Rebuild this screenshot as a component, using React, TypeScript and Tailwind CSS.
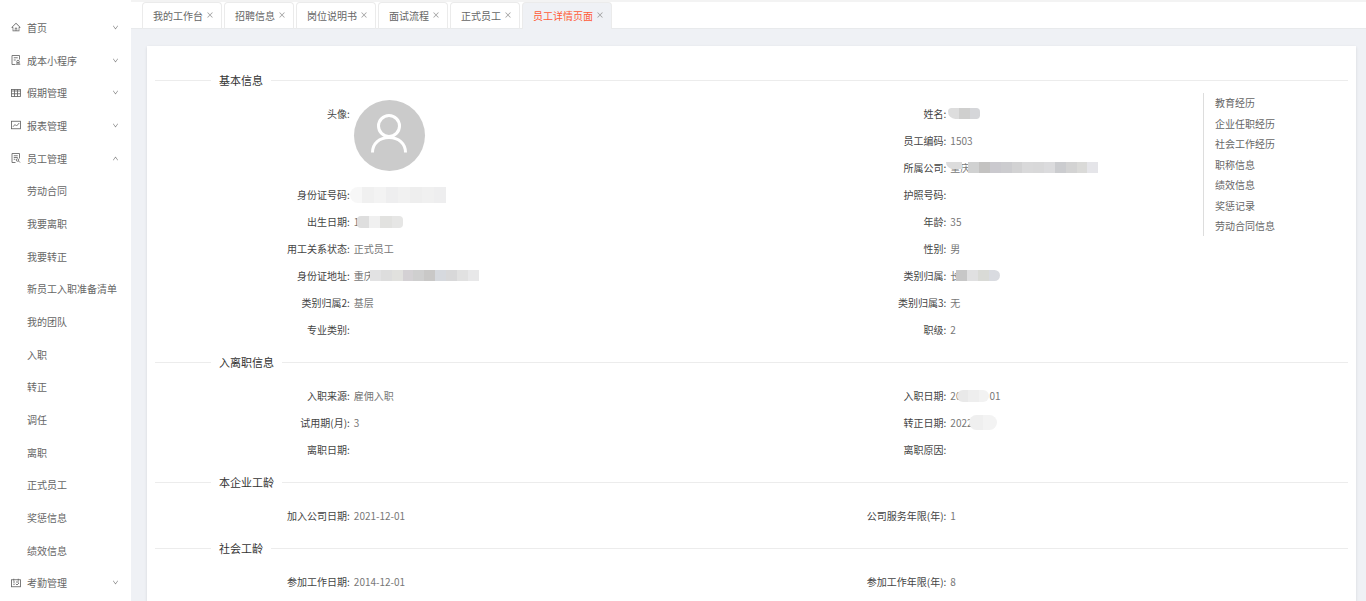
import type { ReactNode } from "react";
import { AiOutlineClose, AiOutlineDown, AiOutlineHome, AiOutlineUp } from "react-icons/ai";

interface MenuEntry {
  label: string;
  icon?: ReactNode;
  open?: boolean;
}

interface Field {
  label: string;
  value?: ReactNode;
}

interface SectionData {
  title: string;
  left: Field[];
  right: Field[];
}

function LineIcon({ children }: { children: ReactNode }) {
  return (
    <svg viewBox="0 0 20 20" className="size-[10px]" fill="none" stroke="currentColor" strokeWidth="1.7">
      {children}
    </svg>
  );
}

const menu: MenuEntry[] = [
  { label: "首页", icon: <AiOutlineHome />, open: false },
  {
    label: "成本小程序",
    icon: (
      <LineIcon>
        <path d="M9 19H2V1h15v8M5.500 5.500h8M5.500 10h4" />
        <circle cx="14" cy="13" r="2.500" />
        <path d="M10 18.500h8.500M10.500 16h7.500" />
      </LineIcon>
    ),
    open: false,
  },
  {
    label: "假期管理",
    icon: (
      <LineIcon>
        <rect x="1" y="3" width="18" height="14" />
        <path d="M1 6h18M1 11.500h18M7 3v14M13 3v14" />
      </LineIcon>
    ),
    open: false,
  },
  {
    label: "报表管理",
    icon: (
      <LineIcon>
        <rect x="1" y="2.500" width="18" height="15" />
        <path d="M4 13.500l4-4.500 3 3 5.500-6" />
      </LineIcon>
    ),
    open: false,
  },
  {
    label: "员工管理",
    icon: (
      <LineIcon>
        <path d="M9 19H2V1h15v10M5.500 5.500h8M5.500 9h8M5.500 12.500h3" />
        <circle cx="13" cy="14" r="2.500" />
        <path d="M15 16l3 3" />
      </LineIcon>
    ),
    open: true,
  },
  { label: "劳动合同" },
  { label: "我要离职" },
  { label: "我要转正" },
  { label: "新员工入职准备清单" },
  { label: "我的团队" },
  { label: "入职" },
  { label: "转正" },
  { label: "调任" },
  { label: "离职" },
  { label: "正式员工" },
  { label: "奖惩信息" },
  { label: "绩效信息" },
  {
    label: "考勤管理",
    icon: (
      <LineIcon>
        <rect x="1" y="3.500" width="18" height="14" />
        <path d="M5.500 1.500v4M14.500 1.500v4M4 8h4M10 8h6M4.500 12.500h3M9.500 11.500l2.500 2.500 4-4" />
      </LineIcon>
    ),
    open: false,
  },
];

const tabs = ["我的工作台", "招聘信息", "岗位说明书", "面试流程", "正式员工", "员工详情页面"];

const anchors = ["教育经历", "企业任职经历", "社会工作经历", "职称信息", "绩效信息", "奖惩记录", "劳动合同信息"];

// Pixelated strip that hides personal data
function Mask({ className, blocks }: { className: string; blocks: string[] }) {
  return (
    <span className={`relative flex overflow-hidden ${className}`}>
      {blocks.map((block, i) => (
        <span key={i} className={`flex-1 ${block}`} />
      ))}
    </span>
  );
}

const sections: SectionData[] = [
  {
    title: "基本信息",
    left: [
      {
        label: "头像",
        value: (
          <span className="flex size-[71px] items-center justify-center rounded-full bg-[#cbcbcb] pb-1">
            <svg viewBox="0 0 40 40" className="size-10" fill="none" stroke="white" strokeWidth="3">
              <circle cx="20" cy="12" r="10.5" />
              <path d="M3.5 38.5c0-9 7-15 16.500-15s16.500 6 16.500 15" />
            </svg>
          </span>
        ),
      },
      {
        label: "身份证号码",
        value: (
          <Mask
            className="-ml-1 h-4 w-24 rounded-l-lg"
            blocks={["bg-[#f7f7f7]", "bg-[#f0f0f0]", "bg-[#f3f3f3]", "bg-[#eeeeef]", "bg-[#f1f1f1]", "bg-[#eeeeee]", "bg-[#f0f0f0]", "bg-[#eeeeef]"]}
          />
        ),
      },
      {
        label: "出生日期",
        value: (
          <>
            1
            <Mask
              className="-ml-0.5 h-3 w-[46px] rounded"
              blocks={["bg-[#dedede]", "bg-[#f0f0f0]", "bg-[#e2e2e0]", "bg-[#e6e6e5]"]}
            />
          </>
        ),
      },
      { label: "用工关系状态", value: "正式员工" },
      {
        label: "身份证地址",
        value: (
          <>
            重庆
            <Mask
              className="-ml-1 h-[11px] w-[109px]"
              blocks={["bg-[#e2e2e3]", "bg-[#dddddd]", "bg-[#e1e1de]", "bg-[#d4d1d4]", "bg-[#cfcfcf]", "bg-[#c9c8c7]", "bg-[#d6d9de]", "bg-[#d8d8d9]", "bg-[#e1e1e1]", "bg-[#e8e8e9]"]}
            />
          </>
        ),
      },
      { label: "类别归属2", value: "基层" },
      { label: "专业类别" },
    ],
    right: [
      {
        label: "姓名",
        value: (
          <Mask
            className="-ml-0.5 h-[11px] w-8 rounded-sm rounded-bl-lg"
            blocks={["bg-[#dddddd]", "bg-[#cfcfce]", "bg-[#d5d6d9]"]}
          />
        ),
      },
      { label: "员工编码", value: "1503" },
      {
        label: "所属公司",
        value: (
          <>
            <span className="relative">
              重庆
              <span className="absolute top-2 -left-1 h-[7px] w-4 rounded-bl-lg bg-[#dcdcdc]" />
            </span>
            <Mask
              className="-ml-0.5 h-[11px] w-[130px]"
              blocks={["bg-[#d0d1d1]", "bg-[#c3c2c1]", "bg-[#cac9ce]", "bg-[#cccccf]", "bg-[#d2d2d3]", "bg-[#d9d9da]", "bg-[#d8d8d9]", "bg-[#dbdbdd]", "bg-[#cbcccf]", "bg-[#d3d3d3]", "bg-[#dadad8]", "bg-[#e5e5e9]"]}
            />
          </>
        ),
      },
      { label: "护照号码" },
      { label: "年龄", value: "35" },
      { label: "性别", value: "男" },
      {
        label: "类别归属",
        value: (
          <>
            长
            <Mask
              className="-ml-1 h-[11px] w-11 rounded-r-md"
              blocks={["bg-[#c7c7c7]", "bg-[#e0e0e1]", "bg-[#d9dad6]", "bg-[#d9dbe0]"]}
            />
          </>
        ),
      },
      { label: "类别归属3", value: "无" },
      { label: "职级", value: "2" },
    ],
  },
  {
    title: "入离职信息",
    left: [
      { label: "入职来源", value: "雇佣入职" },
      { label: "试用期(月)", value: "3" },
      { label: "离职日期" },
    ],
    right: [
      {
        label: "入职日期",
        value: (
          <>
            20
            <Mask className="-ml-1 h-3 w-8 rounded-lg" blocks={["bg-[#e9e9e9]", "bg-[#eeeeee]", "bg-[#f2f2f2]"]} />
            01
          </>
        ),
      },
      {
        label: "转正日期",
        value: (
          <>
            2022
            <Mask className="-ml-1 h-[15px] w-7 rounded-lg" blocks={["bg-[#efefef]", "bg-[#f3f3f3]"]} />
          </>
        ),
      },
      { label: "离职原因" },
    ],
  },
  {
    title: "本企业工龄",
    left: [{ label: "加入公司日期", value: "2021-12-01" }],
    right: [{ label: "公司服务年限(年)", value: "1" }],
  },
  {
    title: "社会工龄",
    left: [{ label: "参加工作日期", value: "2014-12-01" }],
    right: [{ label: "参加工作年限(年)", value: "8" }],
  },
];

function FieldList({ fields }: { fields: Field[] }) {
  return (
    <dl>
      {fields.map((field) => (
        <div key={field.label} className={`flex ${field.label === "头像" ? "h-[81px]" : "h-[27px]"}`}>
          <dt className="w-1/3 pr-1 text-right leading-[27px] text-[#444]">{field.label}:</dt>
          <dd className="flex min-h-[27px] flex-1 items-center self-start leading-[27px] text-[#777]">
            {field.value}
          </dd>
        </div>
      ))}
    </dl>
  );
}

function Section({ section }: { section: SectionData }) {
  return (
    <section>
      <div className="flex h-[39px] items-center gap-2">
        <span className="h-px w-14 bg-[#ececec]" />
        <h2 className="text-[11px] text-[#333]">{section.title}</h2>
        <span className="h-px flex-1 bg-[#ececec]" />
      </div>
      <div className="grid grid-cols-2">
        <FieldList fields={section.left} />
        <FieldList fields={section.right} />
      </div>
    </section>
  );
}

function Sidebar() {
  return (
    <nav className="flex w-[131px] shrink-0 flex-col bg-white pt-[11px] pb-0.5">
      {menu.map((item) => (
        <button
          key={item.label}
          type="button"
          className="flex min-h-8 w-full flex-1 items-center pr-3 pl-[11px] text-left text-[#666]"
        >
          <span className="w-4">{item.icon}</span>
          <span className="flex-1 whitespace-nowrap">{item.label}</span>
          {item.icon && (
            <span className="text-[7px] text-[#777]">{item.open ? <AiOutlineUp /> : <AiOutlineDown />}</span>
          )}
        </button>
      ))}
    </nav>
  );
}

export default function App() {
  const activeTab = "员工详情页面";

  return (
    <div className="flex min-h-screen flex-col border-t-2 border-[#f3f3f3] bg-[#eff1f5] font-['Noto_Sans_CJK_SC',sans-serif] text-[10px]">
      <div className="-mt-0.5 flex flex-1">
        <Sidebar />
        <div className="flex min-w-0 flex-1 flex-col">
          <div className="mt-0.5 flex h-[27px] gap-0.5 border-b border-[#e8eaec] bg-white pl-[11px]">
            {tabs.map((tab) => (
              <button
                key={tab}
                type="button"
                className={`flex h-[27px] items-center gap-[3px] rounded-t-sm border border-b-0 border-[#ebebeb] pr-[7px] pb-0.5 pl-[10px] ${
                  tab === activeTab ? "bg-[#eff1f5] text-[#ff5c38]" : "text-[#666]"
                }`}
              >
                {tab}
                <AiOutlineClose className="size-2 text-[#999]" />
              </button>
            ))}
          </div>
          <main className="relative mt-[17px] mr-[10px] ml-4 flex-1 bg-white px-2 pt-[15px] shadow-sm">
            {sections.map((section) => (
              <Section key={section.title} section={section} />
            ))}
            <ul className="absolute top-[47px] right-2 flex h-[143px] w-[145px] flex-col justify-between border-l border-[#ddd] pl-[11px] leading-5 text-[#666]">
              {anchors.map((anchor) => (
                <li key={anchor}>
                  <a href={`#${anchor}`}>{anchor}</a>
                </li>
              ))}
            </ul>
          </main>
        </div>
      </div>
    </div>
  );
}
